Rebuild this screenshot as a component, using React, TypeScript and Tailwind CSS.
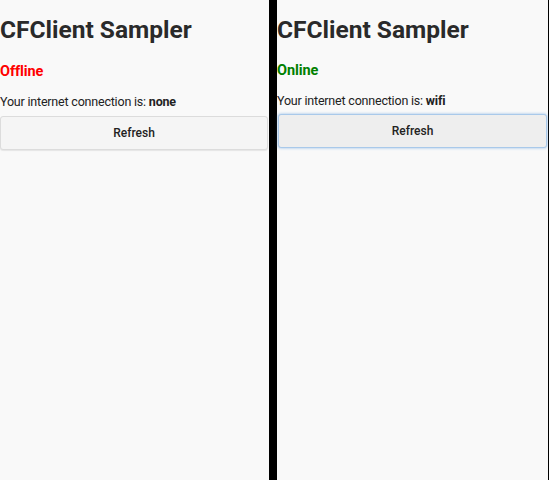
import React from "react";

type Status = { online: boolean; kind: string; focused?: boolean };

export default function App() {
  return (
    <div className="flex h-screen w-full bg-black font-['Roboto',sans-serif]">
      <Pane status={{ online: false, kind: "none" }} className="w-[269px]" />
      <div className="w-[8px] bg-black" />
      <Pane status={{ online: true, kind: "wifi", focused: true }} className="flex-1 mr-[1px]" />
    </div>
  );
}

function Pane({ status, className }: { status: Status; className: string }) {
  return (
    <div className={`h-full bg-[#f9f9f9] text-[#222] ${className}`}>
      <h1 className="mt-[15px] text-[24.5px] font-bold leading-[30px] text-[#2a2a2a]">
        CFClient Sampler
      </h1>
      {status.online ? (
        <div className="mt-[17px] text-[14.5px] font-bold leading-[18px] tracking-[-0.1px] text-[#008000]">Online</div>
      ) : (
        <div className="mt-[18px] text-[14.5px] font-bold leading-[18px] tracking-[-0.1px] text-[#ff0000]">Offline</div>
      )}
      <p className="mt-[13px] text-[12.5px] leading-[16px] tracking-[-0.2px] text-[#222]">
        Your internet connection is: <span className="font-bold">{status.kind}</span>
      </p>
      {status.focused ? (
        <button className="mt-[5px] ml-[1px] h-[34px] w-[269px] rounded-[3px] border border-[#a9c9ea] bg-[#eeeeee] text-[12px] font-medium text-[#222] shadow-[0_0_3px_rgba(80,150,220,0.6)]">
          Refresh
        </button>
      ) : (
        <button className="mt-[6px] h-[34px] w-[268px] rounded-[3px] border border-[#dcdcdc] bg-[#f5f5f5] text-[12px] font-medium text-[#222] shadow-[0_1px_1px_rgba(0,0,0,0.08)]">
          Refresh
        </button>
      )}
    </div>
  );
}
